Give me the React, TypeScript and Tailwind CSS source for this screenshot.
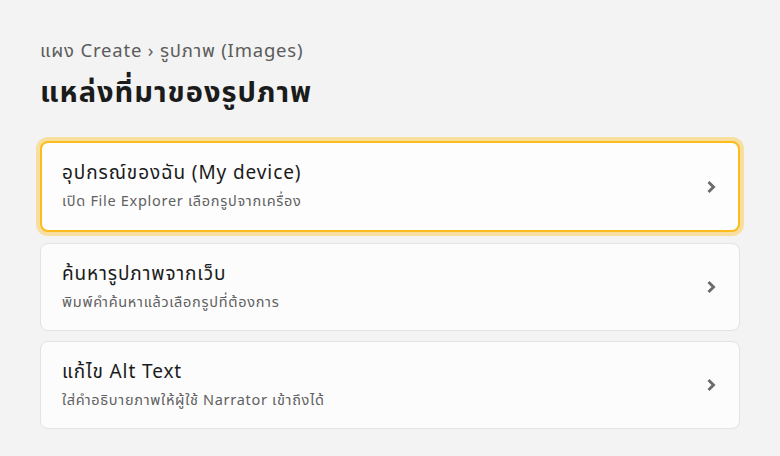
import React from "react";

const items = [
  { title: "อุปกรณ์ของฉัน (My device)", sub: "เปิด File Explorer เลือกรูปจากเครื่อง", selected: true },
  { title: "ค้นหารูปภาพจากเว็บ", sub: "พิมพ์คำค้นหาแล้วเลือกรูปที่ต้องการ", selected: false },
  { title: "แก้ไข Alt Text", sub: "ใส่คำอธิบายภาพให้ผู้ใช้ Narrator เข้าถึงได้", selected: false },
];

function Chevron() {
  return (
    <svg width="13" height="14" viewBox="0 0 13 14" className="shrink-0">
      <path d="M3.5 2 L8.5 7 L3.5 12" fill="none" stroke="#6b6b6b" strokeWidth="2.9" strokeLinecap="butt" strokeLinejoin="miter" />
    </svg>
  );
}

export default function App() {
  return (
    <div
      className="w-[780px] h-[456px] bg-[#f3f3f3] px-[40px] pt-[38px] overflow-hidden"
      style={{ fontFamily: '"Noto Sans Thai", "Segoe UI", "Noto Sans", "Open Sans", sans-serif' }}
    >
      <div className="text-[18.5px] leading-[26px] tracking-[0.8px] text-[#5c5c5c]">แผง Create › รูปภาพ (Images)</div>
      <h1 className="mt-[10px] text-[29px] leading-[38px] tracking-[1px] font-bold text-[#1b1b1b]">แหล่งที่มาของรูปภาพ</h1>
      <div className="mt-[29px] flex flex-col gap-[11px]">
        {items.map((it, i) => (
          <div
            key={it.title}
            className={
              it.selected
                ? "h-[91px] rounded-[8px] bg-[#fdfdfd] border-2 border-[#fbbc1c] shadow-[0_0_0_4px_rgba(251,205,90,0.55)] flex items-center pl-[20px] pr-[20px]"
                : "h-[88px] rounded-[8px] bg-[#fcfcfc] border border-[#e3e3e3] flex items-center pl-[21px] pr-[21px]"
            }
            style={i === 2 ? { marginTop: -1 } : undefined}
          >
            <div className="flex-1 min-w-0">
              <div className="text-[19px] leading-[26px] tracking-[0.9px] text-[#1b1b1b]">{it.title}</div>
              <div className="mt-[5px] text-[14.5px] leading-[20px] tracking-[0.7px] text-[#616161]">{it.sub}</div>
            </div>
            <Chevron />
          </div>
        ))}
      </div>
    </div>
  );
}
